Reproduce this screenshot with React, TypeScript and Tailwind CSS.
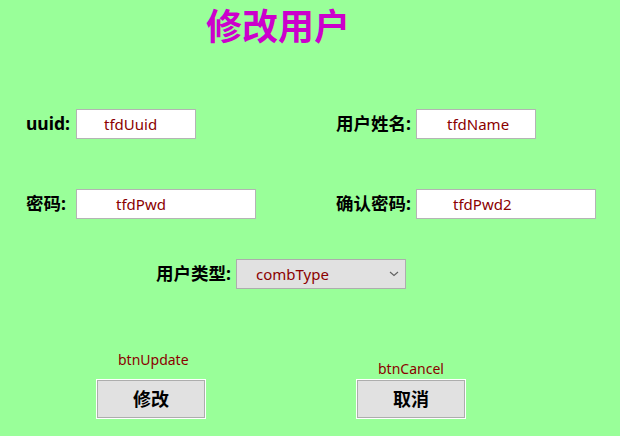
import React from 'react';

const labelFont = { fontFamily: '"Noto Sans", "Noto Sans CJK SC", sans-serif' };

const Field = ({ label, value, labelW, boxW, textPl }: { label: string; value: string; labelW: string; boxW: string; textPl: string }) => (
  <div className="flex items-center">
    <span className={`${labelW} text-[17.5px] font-bold text-black leading-none`}>{label}</span>
    <div className={`${boxW} h-[30px] bg-white border border-[#b4b4b4] flex items-center ${textPl} text-[15px] text-[#8b0000]`}>
      {value}
    </div>
  </div>
);

export default function App() {
  return (
    <div className="w-[620px] h-[436px] bg-[#99ff99] overflow-hidden" style={labelFont}>
      <div className="pl-[206px] pt-[9px] h-[48px]">
        <h1 className="text-[36px] leading-[36px] font-bold text-[#cc00cc]">修改用户</h1>
      </div>

      <div className="grid grid-cols-2 mt-[61px]">
        <div className="pl-[26px]">
          <Field label="uuid:" value="tfdUuid" labelW="w-[50px]" boxW="w-[120px]" textPl="pl-[27px]" />
        </div>
        <div className="pl-[26px]">
          <Field label="用户姓名:" value="tfdName" labelW="w-[80px]" boxW="w-[120px]" textPl="pl-[30px]" />
        </div>
      </div>

      <div className="grid grid-cols-2 mt-[50px]">
        <div className="pl-[26px]">
          <Field label="密码:" value="tfdPwd" labelW="w-[50px]" boxW="w-[180px]" textPl="pl-[39px]" />
        </div>
        <div className="pl-[26px]">
          <Field label="确认密码:" value="tfdPwd2" labelW="w-[80px]" boxW="w-[180px]" textPl="pl-[36px]" />
        </div>
      </div>

      <div className="flex items-center pl-[156px] mt-[40px]">
        <span className="w-[80px] text-[17.5px] font-bold text-black leading-none">用户类型:</span>
        <div className="w-[170px] h-[30px] bg-[#e1e1e1] border border-[#adadad] flex items-center pl-[19px] pr-[5px] text-[15px] text-[#8b0000]">
          <span className="flex-1">combType</span>
          <svg width="10" height="6" viewBox="0 0 10 6" className="mr-[1px]">
            <path d="M1 1 L5 4.5 L9 1" fill="none" stroke="#606060" strokeWidth="1.1" />
          </svg>
        </div>
      </div>

      <div className="flex mt-[62px]">
        <div className="ml-[96px] w-[110px] flex flex-col">
          <span className="ml-[22px] text-[14px] leading-[18px] text-[#8b0000]">btnUpdate</span>
          <button className="mt-[10px] h-[40px] w-[110px] border border-white bg-white p-0">
            <span className="flex h-full w-full items-center justify-center border border-[#adadad] bg-[#e1e1e1] text-[18px] font-bold text-black">修改</span>
          </button>
        </div>
        <div className="ml-[150px] w-[110px] flex flex-col">
          <span className="ml-[22px] mt-[9px] text-[14px] leading-[18px] text-[#8b0000]">btnCancel</span>
          <button className="mt-[1px] h-[40px] w-[110px] border border-white bg-white p-0">
            <span className="flex h-full w-full items-center justify-center border border-[#adadad] bg-[#e1e1e1] text-[18px] font-bold text-black">取消</span>
          </button>
        </div>
      </div>
    </div>
  );
}
